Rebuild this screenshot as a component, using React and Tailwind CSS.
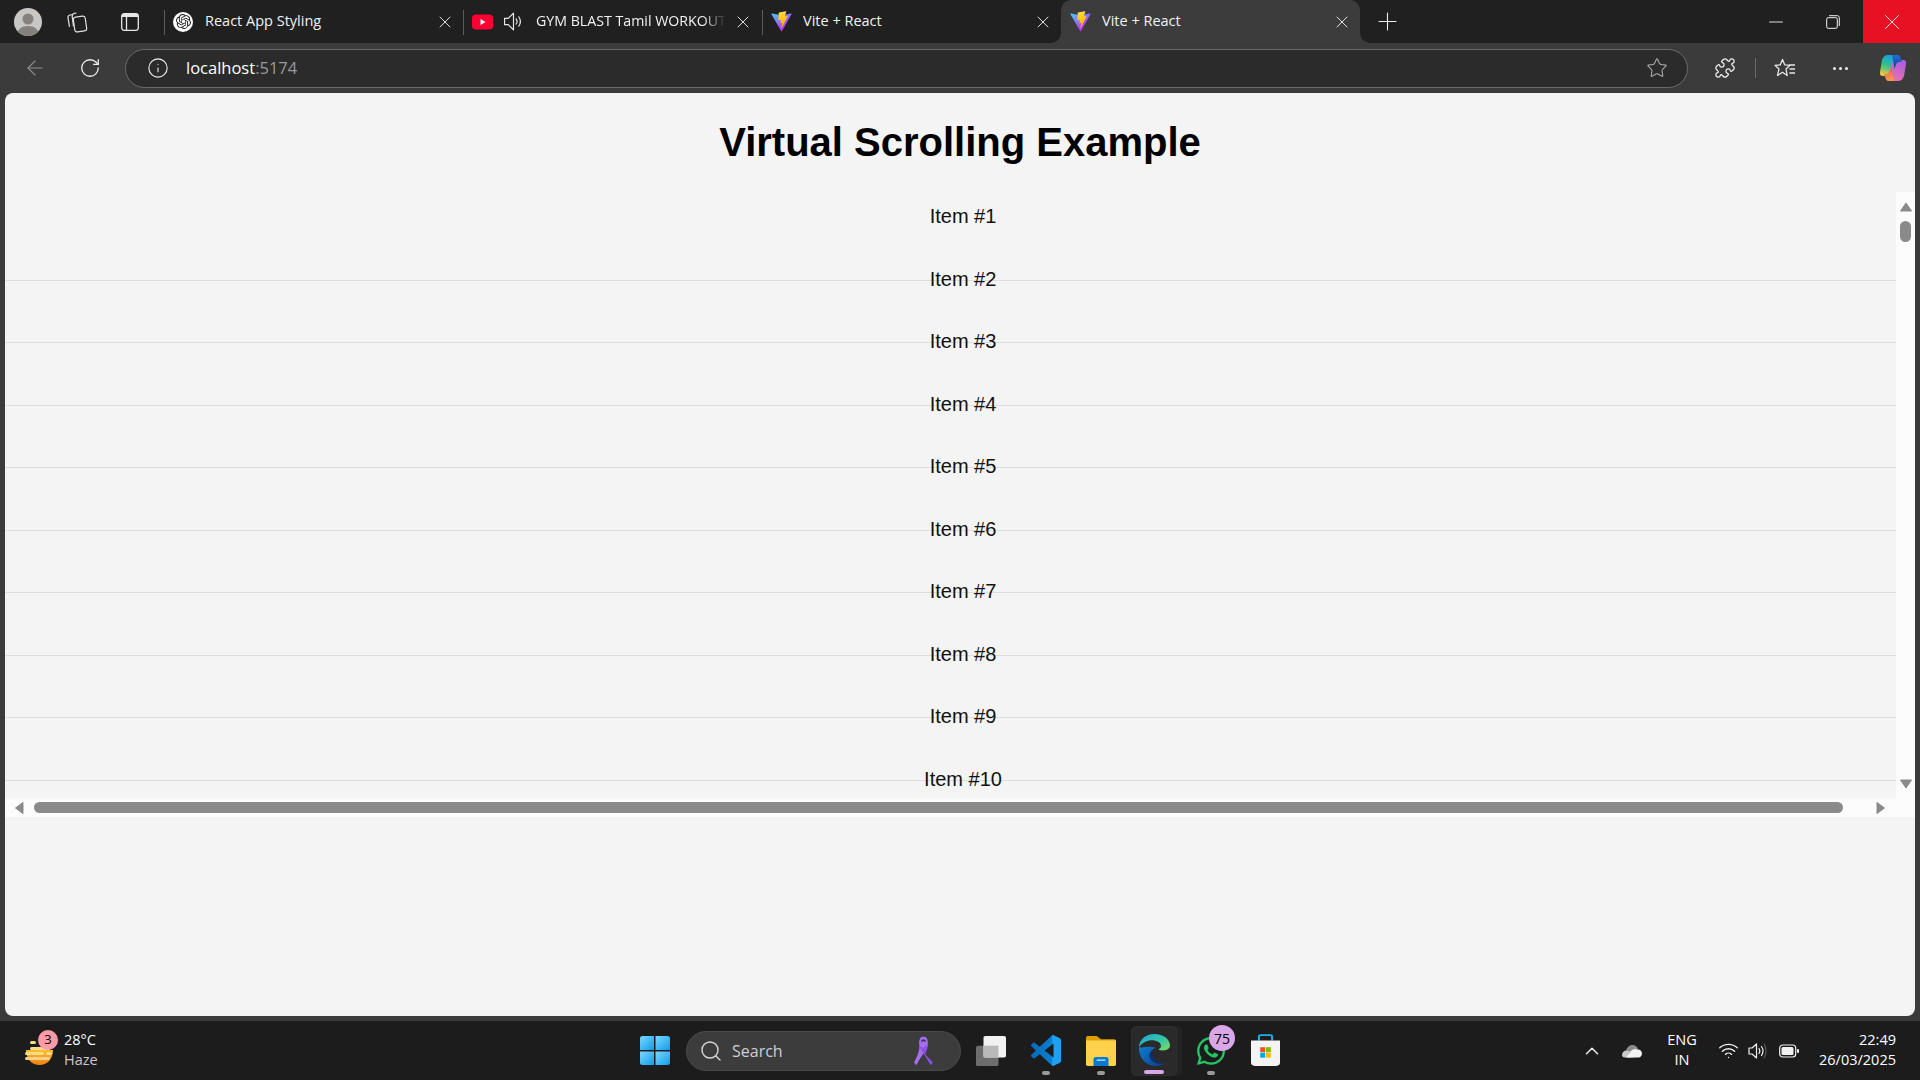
import React from 'react'
import { ArrowLeft, ChevronUp, Info, Minus, Plus, Puzzle, RotateCw, Search, Star, Wifi, X } from 'lucide-react'
import { FaWhatsapp } from 'react-icons/fa'
import { SiOpenai } from 'react-icons/si'

const items = [1, 2, 3, 4, 5, 6, 7, 8, 9, 10]

const ViteLogo = () => (
  <svg width="21" height="21" viewBox="0 0 410 404" fill="none">
    <defs>
      <linearGradient id="vite-a" x1="6" y1="33" x2="235" y2="344" gradientUnits="userSpaceOnUse">
        <stop stopColor="#41D1FF" />
        <stop offset="1" stopColor="#BD34FE" />
      </linearGradient>
      <linearGradient id="vite-b" x1="194" y1="8" x2="236" y2="292" gradientUnits="userSpaceOnUse">
        <stop stopColor="#FFEA83" />
        <stop offset="0.08" stopColor="#FFDD35" />
        <stop offset="1" stopColor="#FFA800" />
      </linearGradient>
    </defs>
    <path d="M399.6 59.5 215 389.7c-3.8 6.8-13.6 6.8-17.5.1L9.2 59.5C5 52.1 11.3 43.2 19.7 44.7l184.8 33c1.2.2 2.4.2 3.6 0l180.9-33c8.3-1.5 14.7 7.3 10.6 14.8Z" fill="url(#vite-a)" />
    <path d="M292.9 1.6 156.3 28.4c-2.2.4-3.9 2.3-4 4.6l-8.4 141.9c-.2 3.3 2.9 5.9 6.1 5.2l38-8.8c3.6-.8 6.8 2.3 6.1 5.9l-11.3 55.3c-.8 3.7 2.8 6.9 6.4 5.8l23.5-7.1c3.6-1.1 7.1 2.1 6.4 5.8l-18 86.9c-1.1 5.4 6.1 8.4 9.1 3.7l2-3.1 111-221.6c1.9-3.7-1.3-7.9-5.4-7.1l-39 7.5c-3.7.7-6.8-2.7-5.8-6.3l25.5-88.2c1-3.7-2.2-7.1-5.9-6.4Z" fill="url(#vite-b)" />
  </svg>
)

const YouTubeLogo = () => (
  <svg width="21" height="16" viewBox="0 0 21 16">
    <rect width="21" height="15" y="0.5" rx="4" fill="#ff0033" />
    <path d="M8.5 5v6l5-3z" fill="#fff" />
  </svg>
)

const ChatLogo = () => (
  <span className="flex h-[20px] w-[20px] items-center justify-center rounded-full bg-white text-[#202020]">
    <SiOpenai size={15} />
  </span>
)

const Speaker = ({ size = 20 }) => (
  <svg width={size} height={size} viewBox="0 0 20 20" fill="none" stroke="#e8e8e8" strokeWidth="1.1">
    <path d="M1.5 7h3.5l5-5v16l-5-5H1.5z" strokeLinejoin="round" />
    <path d="M12.5 7.5c1 1.4 1 3.6 0 5M15 5.5c1.9 2.7 1.9 6.3 0 9" strokeLinecap="round" />
  </svg>
)

const Collections = () => (
  <svg width="22" height="22" viewBox="0 0 22 22" fill="none" stroke="#e0e0e0" strokeWidth="1.2">
    <rect x="8" y="5.5" width="12" height="15" rx="2.5" transform="rotate(-8 14 13)" />
    <path d="M6.5 3.5 4 4c-1.3.3-2.2 1.5-2 2.8l1.5 9M10.5 2 8.5 2.3C7 2.6 6 3.9 6.2 5.4l1.3 10" />
  </svg>
)

const VerticalTabs = () => (
  <svg width="18" height="18" viewBox="0 0 18 18">
    <rect x="0.7" y="0.7" width="16.6" height="16.6" rx="2.5" fill="none" stroke="#e8e8e8" strokeWidth="1.3" />
    <path d="M1 4h16V3a2 2 0 0 0-2-2H3a2 2 0 0 0-2 2z" fill="#e8e8e8" />
    <path d="M5.5 4v13" stroke="#e8e8e8" strokeWidth="1.3" />
  </svg>
)

const Restore = () => (
  <svg width="14" height="14" viewBox="0 0 14 14" fill="none" stroke="#f0f0f0" strokeWidth="1">
    <rect x="0.7" y="2.7" width="10.6" height="10.6" rx="1.5" />
    <path d="M3 .7h8.3a2 2 0 0 1 2 2V11" />
  </svg>
)

const FavoritesList = () => (
  <svg width="22" height="22" viewBox="0 0 22 22" fill="none" stroke="#e8e8e8" strokeWidth="1.3" strokeLinejoin="round">
    <path d="M8.5 2.5l2.2 5.3 5.3.5-4 3.6 1.2 6.6-4.7-3.2-5 3.2 1.5-6.6-4-3.6 5.3-.5z" />
    <path d="M15 8h6M15.5 12h5.5M15.5 16h5.5" />
  </svg>
)

const Copilot = () => (
  <svg width="28" height="28" viewBox="0 0 28 28">
    <defs>
      <linearGradient id="cop-a" x1="0.6" y1="0" x2="0.3" y2="1">
        <stop offset="0" stopColor="#1a9be8" />
        <stop offset="0.5" stopColor="#2bc28b" />
        <stop offset="1" stopColor="#f4c83f" />
      </linearGradient>
      <linearGradient id="cop-b" x1="0.8" y1="0" x2="0.3" y2="1">
        <stop offset="0" stopColor="#a85fe6" />
        <stop offset="1" stopColor="#ee6fa8" />
      </linearGradient>
      <linearGradient id="cop-c" x1="0" y1="0" x2="0" y2="1">
        <stop offset="0" stopColor="#1f6fd8" />
        <stop offset="1" stopColor="#173a8a" />
      </linearGradient>
      <linearGradient id="cop-d" x1="0" y1="0" x2="0" y2="1">
        <stop offset="0" stopColor="#f0584e" />
        <stop offset="1" stopColor="#f6a04d" />
      </linearGradient>
    </defs>
    <path d="M9 1h9c1.500 0 2.500 1 2 3l-5 15c-.7 2-2 3-4 3H4c-2.500 0-3.500-1.500-3-4L3 6c.8-3 3-5 6-5z" fill="url(#cop-a)" />
    <path d="M19 27h-9c-1.500 0-2.500-1-2-3l5-15c.7-2 2-3 4-3h7c2.500 0 3.500 1.500 3 4l-2 12c-.8 3-3 5-6 5z" fill="url(#cop-b)" />
    <path d="M15 1h3c2 0 3 1 3.500 3L23 8c-3-.5-5 .5-6 2.500L15.500 15l-1.500-9c-.3-2-.5-4-1-5z" fill="url(#cop-c)" />
    <path d="M13 27h-3c-2 0-3-1-3.500-3L5 20c3 .5 5-.5 6-2.500l1.500-4.500 1.500 9c.3 2 .5 4 1 5z" fill="url(#cop-d)" />
  </svg>
)

const WeatherIcon = () => (
  <svg width="30" height="30" viewBox="0 0 30 30">
    <defs>
      <linearGradient id="sun" x1="0" y1="0" x2="0" y2="1">
        <stop offset="0" stopColor="#fbc02d" />
        <stop offset="1" stopColor="#f07f13" />
      </linearGradient>
    </defs>
    <path d="M2 14h27c0 9-6 15-13.5 15S2 23 2 14z" fill="url(#sun)" />
    <g fill="#f9dc83">
      <rect x="6" y="5" width="6" height="3" rx="1.5" />
      <rect x="6" y="11" width="20" height="3" rx="1.5" />
      <rect x="1" y="16" width="19" height="3" rx="1.5" />
      <rect x="22" y="16" width="6" height="3" rx="1.5" />
      <rect x="1" y="21" width="25" height="3" rx="1.5" fill="#f3d18a" />
    </g>
  </svg>
)

const WindowsLogo = () => (
  <svg width="30" height="29" viewBox="0 0 30 29">
    <defs>
      <linearGradient id="win" x1="0" y1="0" x2="1" y2="1">
        <stop offset="0" stopColor="#7bd8fb" />
        <stop offset="1" stopColor="#0f9bf0" />
      </linearGradient>
    </defs>
    <path d="M2.5 0H14v14H0V2.5A2.5 2.5 0 0 1 2.5 0z" fill="url(#win)" />
    <path d="M15.5 0H27.5A2.5 2.5 0 0 1 30 2.5V14H15.5z" fill="url(#win)" />
    <path d="M0 15.5h14V29H2.5A2.5 2.5 0 0 1 0 26.5z" fill="url(#win)" />
    <path d="M15.5 15.5H30v11a2.5 2.5 0 0 1-2.5 2.5h-12z" fill="url(#win)" />
  </svg>
)

const Ribbon = () => (
  <svg width="21" height="32" viewBox="0 0 18 29" fill="none">
    <path d="M5 8C5 3 6.5 1.5 9 1.5S13 3 13 8c0 4-6 11-10.5 19.5L.5 25C4 18 6 13 5 8z" fill="#a56ef0" />
    <path d="M13 8c0 4-1 6-2.5 9.5L17.5 25 15.5 27.5C11 19 7 15 5.5 10c2 2 5 2 7.5-2z" fill="#8b52e0" />
    <path d="M6.5 6.5C7 4.5 8 4 9 4s2 .5 2.5 2.5C10 5.5 8 5.5 6.5 6.5z" fill="#3a2a55" />
  </svg>
)

const TaskView = () => (
  <svg width="30" height="30" viewBox="0 0 24 28" preserveAspectRatio="none">
    <rect y="9" width="18" height="19" rx="1.5" fill="#6d6d6d" />
    <rect x="6" y="0" width="18" height="20" rx="1.5" fill="#f2f2f2" />
    <rect x="6" y="9" width="12" height="11" fill="#b9b9b9" />
  </svg>
)

const VSCodeLogo = () => (
  <svg width="30" height="31" viewBox="0 0 24 24" preserveAspectRatio="none">
    <defs>
      <linearGradient id="vsc" x1="0" y1="0" x2="1" y2="0">
        <stop offset="0" stopColor="#0a69b8" />
        <stop offset="0.7" stopColor="#0a7fd0" />
        <stop offset="0.72" stopColor="#1da1f0" />
        <stop offset="1" stopColor="#1da1f0" />
      </linearGradient>
    </defs>
    <path d="M23.15 2.587L18.21.21a1.494 1.494 0 0 0-1.705.29l-9.46 8.63-4.12-3.128a.999.999 0 0 0-1.276.057L.327 7.261A1 1 0 0 0 .326 8.74L3.899 12 .326 15.26a1 1 0 0 0 .001 1.479L1.65 17.94a.999.999 0 0 0 1.276.057l4.12-3.128 9.46 8.63a1.492 1.492 0 0 0 1.704.29l4.942-2.377A1.5 1.5 0 0 0 24 20.06V3.939a1.5 1.5 0 0 0-.85-1.352zm-5.146 14.861L10.826 12l7.178-5.448v10.896z" fill="url(#vsc)" />
  </svg>
)

const FolderLogo = () => (
  <svg width="30" height="30" viewBox="0 0 24 27" preserveAspectRatio="none">
    <path d="M1.5 0h7L12 3h10.5A1.5 1.5 0 0 1 24 4.5V8H0V1.5A1.5 1.5 0 0 1 1.5 0z" fill="#e0a000" />
    <path d="M0 4h24v21.5a1.5 1.5 0 0 1-1.5 1.5h-21A1.5 1.5 0 0 1 0 25.5z" fill="#ffd24d" />
    <path d="M6 27v-6a2 2 0 0 1 2-2h8a2 2 0 0 1 2 2v6z" fill="#0a78d0" />
    <rect x="8.5" y="21" width="7" height="1.5" fill="#8fd0f5" />
  </svg>
)

const EdgeLogo = () => (
  <svg width="31" height="33" viewBox="0 0 24 30" preserveAspectRatio="none">
    <defs>
      <linearGradient id="edge-a" x1="0" y1="0" x2="1" y2="1">
        <stop offset="0" stopColor="#1fa3d8" />
        <stop offset="0.55" stopColor="#36c6a8" />
        <stop offset="1" stopColor="#7fdc5a" />
      </linearGradient>
      <linearGradient id="edge-b" x1="0" y1="0" x2="1" y2="1">
        <stop offset="0" stopColor="#0f7ccf" />
        <stop offset="1" stopColor="#0b3e8a" />
      </linearGradient>
    </defs>
    <path d="M12 0C5 0 .3 5 0 12c3-5 8-7 12-6 4 1 5 3 5 5 0 1.5-1 2.5-2 3 3 2 9 1 9-3.5C24 4.5 18.5 0 12 0z" fill="url(#edge-a)" />
    <path d="M0 12c-.5 9 5 17 12.5 17 3 0 5.5-.8 7.5-2.5-5 1.5-10-.5-11.5-5-1-3.5.5-7 4.5-9-5-2-10 .5-12.5-.5z" fill="url(#edge-b)" />
    <path d="M8.5 17c-1.5 5 2 9.5 7 9.500 2 0 3.500-.5 4.500-1-3 .5-6 0-8-2.500-1.500-2-2-4-1-6-1-.5-2-.5-2.500 0z" fill="#0a2f6e" />
  </svg>
)

const StoreLogo = () => (
  <svg width="29" height="33" viewBox="0 0 22 30" preserveAspectRatio="none">
    <path d="M6 6V2.5A1.5 1.5 0 0 1 7.5 1h7A1.5 1.5 0 0 1 16 2.5V6" fill="none" stroke="#1ab0e8" strokeWidth="1.5" />
    <path d="M0 6h22v20a3 3 0 0 1-3 3H3a3 3 0 0 1-3-3z" fill="#f4f4f4" />
    <rect x="7" y="12" width="3.7" height="4.5" fill="#f25022" />
    <rect x="11.3" y="12" width="3.7" height="4.5" fill="#7fba00" />
    <rect x="7" y="17" width="3.7" height="4.5" fill="#00a4ef" />
    <rect x="11.3" y="17" width="3.7" height="4.5" fill="#ffb900" />
  </svg>
)

const OneDrive = () => (
  <svg width="20" height="14" viewBox="0 0 20 14">
    <path d="M4 6.5C5 3 7.5 1 10.5 1c2.5 0 4.5 1.5 5.5 4L8 9z" fill="#8c8c8c" />
    <path d="M0 11c0-2.5 2-4.5 4.5-4.5 1 0 2 .5 2.5 1l2-.5 2.5 6.5H2.5C1 13.5 0 12.500 0 11z" fill="#c9c9c9" />
    <path d="M8 9c1-2.5 3-4 5.5-4 .8 0 1.700.2 2.500.5 2.500 0 4 2 4 4s-1.500 4-3.500 4H4z" fill="#f2f2f2" />
  </svg>
)

const TrayVolume = () => (
  <svg width="20" height="18" viewBox="0 0 20 18" fill="none" strokeWidth="1.2">
    <path d="M1 6h3l4.5-4v14L4 12H1z" stroke="#f0f0f0" strokeLinejoin="round" />
    <path d="M11 6.5c1 1.5 1 3.5 0 5M13.5 4.5c1.8 2.7 1.8 6.3 0 9" stroke="#f0f0f0" strokeLinecap="round" />
    <path d="M16 2c2.8 4 2.8 10 0 14" stroke="#5a5a5a" strokeLinecap="round" />
  </svg>
)

const Battery = () => (
  <svg width="20" height="14" viewBox="0 0 20 14">
    <rect x="0.7" y="1" width="16" height="12" rx="3" fill="none" stroke="#f0f0f0" strokeWidth="1.2" />
    <rect x="2.5" y="3" width="12" height="8" rx="1.5" fill="#f0f0f0" />
    <rect x="18" y="5" width="2" height="4" rx="1" fill="#f0f0f0" />
  </svg>
)

const Tab = ({ icon, title, speaker, fade, active }) => (
  <div className={`relative flex h-[43px] w-[299px] shrink-0 items-center ${active ? 'rounded-t-[10px] bg-[#3c3c3c]' : ''}`}>
    {!active && <span className="absolute left-0 top-[10px] h-[25px] w-px bg-[#5c5c5c]" />}
    {active && (
      <>
        <span className="absolute bottom-0 -left-[10px] h-[10px] w-[10px] bg-[#3c3c3c]">
          <span className="block h-full w-full rounded-br-[10px] bg-[#202020]" />
        </span>
        <span className="absolute bottom-0 -right-[10px] h-[10px] w-[10px] bg-[#3c3c3c]">
          <span className="block h-full w-full rounded-bl-[10px] bg-[#202020]" />
        </span>
      </>
    )}
    <span className="ml-[8px] flex w-[22px] shrink-0 justify-center">{icon}</span>
    {speaker && (
      <span className="ml-[9px] flex w-[22px] shrink-0 justify-center">
        <Speaker size={21} />
      </span>
    )}
    <span
      className={`overflow-hidden whitespace-nowrap pb-[2px] text-[#f2f2f2] ${speaker ? 'ml-[12px] w-[190px] text-[14.2px]' : 'ml-[11px] w-[230px] text-[14.5px]'} ${fade ? '[mask-image:linear-gradient(to_right,black_88%,transparent)]' : ''}`}
    >
      {title}
    </span>
    <span className={`flex shrink-0 justify-center ${speaker ? 'ml-[7px] w-[20px]' : 'ml-[0px] w-[20px]'}`}>
      <X size={20} strokeWidth={1.1} color="#f0f0f0" />
    </span>
  </div>
)

const TabStrip = () => (
  <div className="flex h-[43px] items-center bg-[#202020]">
    <span className="ml-[14px] flex h-[28px] w-[28px] shrink-0 items-end justify-center overflow-hidden rounded-full bg-[#c9c7c4]">
      <svg width="28" height="28" viewBox="0 0 28 28">
        <circle cx="14" cy="11" r="5.5" fill="#85827e" />
        <path d="M3 28c0-7 5-10 11-10s11 3 11 10z" fill="#85827e" />
      </svg>
    </span>
    <span className="ml-[24px] flex w-[22px] shrink-0 justify-center">
      <Collections />
    </span>
    <span className="ml-[31px] flex w-[22px] shrink-0 justify-center">
      <VerticalTabs />
    </span>
    <div className="ml-[23px] flex">
      <Tab icon={<ChatLogo />} title="React App Styling" />
      <Tab icon={<YouTubeLogo />} speaker fade title="GYM BLAST Tamil WORKOUT SONGS" />
      <Tab icon={<ViteLogo />} title="Vite + React" />
      <Tab icon={<ViteLogo />} title="Vite + React" active />
    </div>
    <span className="ml-[17px] flex w-[20px] shrink-0 justify-center">
      <Plus size={29} strokeWidth={0.9} color="#f0f0f0" className="shrink-0" />
    </span>
    <span className="ml-[369px] flex w-[20px] shrink-0 justify-center">
      <Minus size={22} strokeWidth={1} color="#f0f0f0" className="shrink-0" />
    </span>
    <span className="ml-[37px] flex w-[20px] shrink-0 justify-center">
      <Restore />
    </span>
    <span className="ml-[20px] flex h-[43px] flex-1 items-center justify-center bg-[#e81123]">
      <X size={26} strokeWidth={0.8} color="#fff" />
    </span>
  </div>
)

const Toolbar = () => (
  <div className="flex h-[50px] items-center bg-[#3b3b3b]">
    <span className="ml-[23px] flex w-[24px] shrink-0 justify-center">
      <ArrowLeft size={24} strokeWidth={1.1} color="#8d8d8d" />
    </span>
    <span className="ml-[31px] flex w-[24px] shrink-0 justify-center">
      <RotateCw size={22} strokeWidth={1.4} color="#f0f0f0" />
    </span>
    <div className="ml-[23px] flex h-[39px] w-[1563px] shrink-0 items-center rounded-full border border-[#6b6b6b] bg-[#2b2b2b]">
      <span className="ml-[22px] flex w-[20px] shrink-0 justify-center">
        <Info size={22} strokeWidth={1.2} color="#f0f0f0" className="shrink-0" />
      </span>
      <span className="ml-[18px] text-[16.5px] text-white">
        localhost<span className="text-[#9a9a9a]">:5174</span>
      </span>
      <span className="ml-auto mr-[19px] flex w-[22px] justify-center">
        <Star size={22} strokeWidth={1.2} color="#a8a8a8" />
      </span>
    </div>
    <span className="ml-[25px] flex w-[24px] shrink-0 justify-center">
      <Puzzle size={22} strokeWidth={1.4} color="#efefef" />
    </span>
    <span className="ml-[18px] h-[20px] w-px shrink-0 bg-[#6a6a6a]" />
    <span className="ml-[18px] flex w-[22px] shrink-0 justify-center">
      <FavoritesList />
    </span>
    <span className="ml-[33px] flex w-[22px] shrink-0 justify-center gap-[3px]">
      <span className="h-[3px] w-[3px] rounded-full bg-[#eee]" />
      <span className="h-[3px] w-[3px] rounded-full bg-[#eee]" />
      <span className="h-[3px] w-[3px] rounded-full bg-[#eee]" />
    </span>
    <span className="ml-[28px] flex w-[28px] shrink-0 justify-center">
      <Copilot />
    </span>
  </div>
)

const Arrow = ({ points, className = '' }) => (
  <svg width="14" height="14" viewBox="0 0 14 14" className={`shrink-0 ${className}`}>
    <polygon points={points} fill="#8a8a8a" stroke="#8a8a8a" strokeWidth="1" strokeLinejoin="round" />
  </svg>
)

const VirtualList = () => (
  <div className="flex h-[625px] flex-col">
    <div className="flex h-[606px]">
      <div className="flex-1 overflow-hidden pt-[25px]">
        {items.map((n) => (
          <div key={n} className={`h-[62.5px] border-t pl-[25px] text-center ${n === 1 ? 'border-transparent' : 'border-[#dddddd]'}`}>
            <span className="-mt-[14px] block text-[20px] leading-[24px] text-[#111]">Item #{n}</span>
          </div>
        ))}
      </div>
      <div className="flex w-[19px] shrink-0 flex-col items-center bg-[#fcfcfc] pt-[8px]">
        <Arrow points="1.5,11 12.5,11 7,3" />
        <span className="mt-[7px] h-[21px] w-[11px] rounded-full bg-[#8a8a8a]" />
        <Arrow points="1.5,3 12.5,3 7,11" className="mt-auto mb-[7px]" />
      </div>
    </div>
    <div className="flex h-[19px] items-center bg-[#fcfcfc]">
      <Arrow points="11,1.5 11,12.5 3.5,7" className="ml-[7px]" />
      <span className="ml-[8px] h-[11px] w-[1809px] rounded-full bg-[#8a8a8a]" />
      <Arrow points="3,1.5 3,12.5 10.5,7" className="ml-[31px]" />
    </div>
  </div>
)

const Page = () => (
  <div className="flex-1 bg-[#3b3b3b] px-[5px] pb-[5px]">
    <div className="h-full overflow-hidden rounded-[8px] bg-[#f4f4f4] font-['Liberation_Sans',sans-serif]">
      <h1 className="flex h-[99px] items-center justify-center pb-[1px] text-[40px] font-bold text-black">Virtual Scrolling Example</h1>
      <VirtualList />
    </div>
  </div>
)

const TaskIcon = ({ children, bar, className = '' }) => (
  <span className={`relative flex shrink-0 items-center justify-center ${className}`}>
    {children}
    {bar && <span className={`absolute left-1/2 h-[4px] -translate-x-1/2 rounded-full ${bar}`} />}
  </span>
)

const Taskbar = () => (
  <div className="flex h-[59px] items-center bg-[#1c1c1c] text-white">
    <span className="relative ml-[24px] flex w-[30px] shrink-0">
      <WeatherIcon />
      <span className="absolute -top-[6px] left-[14px] flex h-[20px] w-[20px] items-center justify-center rounded-full bg-[#ff9aa9] text-[13px] text-black">3</span>
    </span>
    <div className="ml-[10px] flex w-[80px] shrink-0 flex-col pb-[1px] text-[14.5px] leading-[20px]">
      <span>28°C</span>
      <span className="text-[#c8c8c8]">Haze</span>
    </div>
    <span className="ml-[496px] flex shrink-0 justify-center">
      <WindowsLogo />
    </span>
    <div className="ml-[16px] flex h-[40px] w-[275px] shrink-0 items-center rounded-full border border-[#4a4a4a] bg-[#3c3c3c]">
      <Search size={24} strokeWidth={1.4} color="#d8d8d8" className="ml-[12px]" />
      <span className="ml-[9px] text-[16px] text-[#cfcfcf]">Search</span>
      <span className="ml-auto mr-[26px] flex">
        <Ribbon />
      </span>
    </div>
    <TaskIcon className="ml-[15px] w-[30px]">
      <TaskView />
    </TaskIcon>
    <TaskIcon className="ml-[25px] h-[59px] w-[30px]" bar="bottom-[5px] w-[8px] bg-[#9a9a9a]">
      <VSCodeLogo />
    </TaskIcon>
    <TaskIcon className="ml-[25px] h-[59px] w-[30px]" bar="bottom-[5px] w-[8px] bg-[#9a9a9a]">
      <FolderLogo />
    </TaskIcon>
    <TaskIcon className="ml-[15px] h-[50px] w-[46px] rounded-[5px] border border-[#2e2e2e] bg-[#2a2a2a] shadow-[5px_0_0_#242424]" bar="bottom-[1px] w-[20px] bg-[#d9a6e8]">
      <EdgeLogo />
    </TaskIcon>
    <TaskIcon className="ml-[19px] h-[59px] w-[30px]" bar="bottom-[5px] w-[8px] bg-[#9a9a9a]">
      <FaWhatsapp size={32} color="#25c565" />
      <span className="absolute left-[13px] top-[4px] flex h-[26px] w-[26px] items-center justify-center rounded-full bg-[#d9a6e8] text-[14px] text-black">75</span>
    </TaskIcon>
    <TaskIcon className="ml-[25px] w-[29px]">
      <StoreLogo />
    </TaskIcon>
    <span className="ml-[302px] flex w-[20px] shrink-0 justify-center">
      <ChevronUp size={22} strokeWidth={1.6} color="#f0f0f0" className="shrink-0" />
    </span>
    <span className="ml-[20px] flex w-[20px] shrink-0 justify-center">
      <OneDrive />
    </span>
    <div className="ml-[24px] flex w-[32px] shrink-0 flex-col items-center pb-[1px] text-[14.5px] leading-[20px]">
      <span>ENG</span>
      <span>IN</span>
    </div>
    <span className="ml-[20px] flex w-[20px] shrink-0 justify-center">
      <Wifi size={21} strokeWidth={1.6} color="#f0f0f0" className="shrink-0" />
    </span>
    <span className="ml-[10px] flex w-[20px] shrink-0 justify-center">
      <TrayVolume />
    </span>
    <span className="ml-[11px] flex w-[20px] shrink-0 justify-center">
      <Battery />
    </span>
    <div className="ml-auto mr-[24px] flex flex-col items-end pb-[1px] text-[14.5px] leading-[20px]">
      <span>22:49</span>
      <span>26/03/2025</span>
    </div>
  </div>
)

export default function App() {
  return (
    <div className="flex h-screen w-full flex-col overflow-hidden bg-[#3b3b3b] font-['Open_Sans',sans-serif]">
      <TabStrip />
      <Toolbar />
      <Page />
      <Taskbar />
    </div>
  )
}
